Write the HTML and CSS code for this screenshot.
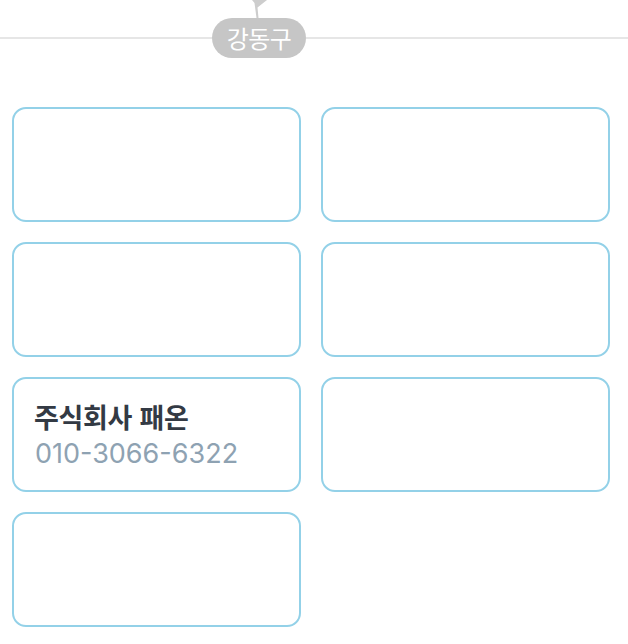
FILE: index.html
```html
<!DOCTYPE html>
<html lang="ko">
<head>
<meta charset="utf-8">
<link rel="stylesheet" href="styles.css">
</head>
<body>
<div class="page">
  <header class="district">
    <svg class="pointer" width="20" height="20" viewBox="0 0 20 20">
      <polygon points="2,0 17,0 7.5,7.5 8.5,18 6.5,18 4.5,3" fill="#cdcdcd"/>
    </svg>
    <span class="rule rule-left"></span>
    <span class="pill">강동구</span>
    <span class="rule"></span>
  </header>
  <main class="grid">
    <div class="card"></div>
    <div class="card"></div>
    <div class="card"></div>
    <div class="card"></div>
    <div class="card">
      <div class="name">주식회사 패온</div>
      <div class="phone">010-3066-6322</div>
    </div>
    <div class="card"></div>
    <div class="card"></div>
  </main>
</div>
</body>
</html>
```
FILE: styles.css
```css
html, body {
  margin: 0;
  padding: 0;
  background: #ffffff;
}
.page {
  width: 628px;
  font-family: "Noto Sans CJK KR", "Noto Sans", sans-serif;
}
.district {
  position: relative;
  display: flex;
  align-items: center;
  height: 40px;
  padding-top: 18px;
  margin-bottom: 49px;
}
.pointer {
  position: absolute;
  left: 250px;
  top: 0;
}
.rule {
  flex: 1 1 auto;
  height: 2px;
  background: #e6e6e6;
}
.rule-left {
  flex: 0 0 212px;
}
.pill {
  flex: 0 0 94px;
  height: 40px;
  border-radius: 20px;
  background: #c6c6c6;
  color: #ffffff;
  font-size: 24px;
  line-height: 40px;
  text-align: center;
  letter-spacing: -0.5px;
}
.grid {
  display: grid;
  grid-template-columns: 289px 289px;
  column-gap: 20px;
  row-gap: 20px;
  padding-left: 12px;
}
.card {
  box-sizing: border-box;
  height: 115px;
  border: 2px solid #93d1e8;
  border-radius: 14px;
  padding: 0 22px 0 22px;
  display: flex;
  flex-direction: column;
  justify-content: center;
}
.name {
  font-size: 27px;
  font-weight: 700;
  color: #333a44;
  line-height: 34px;
  letter-spacing: -0.3px;
  margin-left: -2px;
  margin-top: 2px;
}
.phone {
  font-family: "Inter", "Noto Sans", sans-serif;
  font-size: 27px;
  color: #8ea2b2;
  line-height: 34px;
  margin-top: 3px;
  margin-left: -1px;
}
```
